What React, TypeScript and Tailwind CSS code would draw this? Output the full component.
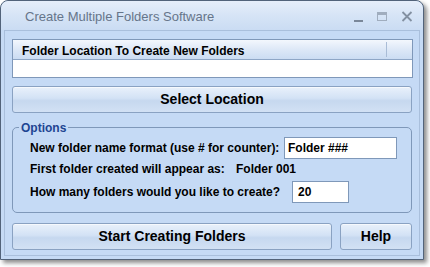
import React from "react";

const font = { fontFamily: '"Liberation Sans", Arial, sans-serif' };

function Btn({ children, className }: { children: React.ReactNode; className: string }) {
  return (
    <div
      className={`flex items-center justify-center rounded-[3px] border border-[#8aa2c2] bg-[linear-gradient(#e9f1fb,#d3e2f5_45%,#c6d8ef_55%,#d2e1f4)] text-[14px] font-bold text-black shadow-[inset_0_1px_0_#f6f9fd] ${className}`}
    >
      {children}
    </div>
  );
}

export default function App() {
  return (
    <div className="w-[430px] h-[267px] bg-white relative overflow-hidden" style={font}>
      <div className="w-[424px] h-[260px] rounded-t-[8px] border border-[#52637a] bg-[#c5daf5] shadow-[3px_3px_4px_rgba(0,0,0,0.45)] flex flex-col overflow-hidden">
        {/* title bar */}
        <div className="h-[29px] shrink-0 flex items-center bg-[linear-gradient(#e6eefa,#d6e4f6_50%,#cadcf3)] rounded-t-[7px]">
          <div className="pl-[24px] pt-[3px] text-[13px] text-[#66758a]">
            Create Multiple Folders Software
          </div>
          <div className="ml-auto flex items-center gap-[14px] pr-[10px] pt-[2px]">
            <div className="w-[9px] h-[10px] flex items-end">
              <div className="w-[9px] h-[2px] bg-[#7a8799]" />
            </div>
            <div className="w-[10px] h-[9px] border border-[#a0adbe] border-t-[3px]" />
            <svg width="12" height="11" viewBox="0 0 12 11">
              <path d="M1.5 1 L10.5 10 M10.5 1 L1.5 10" stroke="#8390a1" strokeWidth="1.8" />
            </svg>
          </div>
        </div>
        {/* frame */}
        <div className="flex-1 px-[3px] pb-[3px] flex">
          <div className="flex-1 border border-[#a9bfdc] flex flex-col pl-[7px] pt-[8px]">
            {/* listview */}
            <div className="w-[401px] h-[39px] border border-[#7f98b9] bg-white flex flex-col">
              <div className="h-[20px] border-b border-[#8ea6c6] bg-[linear-gradient(#f3f7fd,#dde8f7_50%,#cbdcf2)] flex items-center">
                <div className="w-[374px] border-r border-[#a9bcd6] h-[15px] flex items-center pl-[9px] pt-[2px] text-[12px] font-bold text-black">
                  Folder Location To Create New Folders
                </div>
              </div>
            </div>
            {/* select location */}
            <Btn className="mt-[8px] w-[400px] h-[27px]">Select Location</Btn>
            {/* options group */}
            <div className="relative mt-[14px] w-[400px] h-[86px] rounded-[5px] border border-[#7f98b9]">
              <div className="absolute left-[6px] top-[-9px] px-[2px] bg-[#c5daf5] text-[12px] font-bold text-[#1f4592]">
                Options
              </div>
              <div className="flex flex-col pl-[17px] text-[12px] font-bold text-black">
                <div className="flex items-center mt-[9px] h-[22px]">
                  <span className="w-[254px]">New folder name format (use # for counter):</span>
                  <div className="w-[113px] h-[22px] border border-[#7f98b9] bg-white flex items-center pl-[3px]">
                    Folder ###
                  </div>
                </div>
                <div className="flex items-center h-[20px] mt-[0px]">
                  <span className="w-[206px]">First folder created will appear as:</span>
                  <span>Folder 001</span>
                </div>
                <div className="flex items-center mt-[2px] h-[22px]">
                  <span className="w-[262px]">How many folders would you like to create?</span>
                  <div className="w-[57px] h-[22px] border border-[#7f98b9] bg-white flex items-center pl-[5px]">
                    20
                  </div>
                </div>
              </div>
            </div>
            {/* bottom buttons */}
            <div className="mt-[10px] flex gap-[8px]">
              <Btn className="w-[320px] h-[27px]">Start Creating Folders</Btn>
              <Btn className="w-[72px] h-[27px]">Help</Btn>
            </div>
          </div>
        </div>
      </div>
    </div>
  );
}
